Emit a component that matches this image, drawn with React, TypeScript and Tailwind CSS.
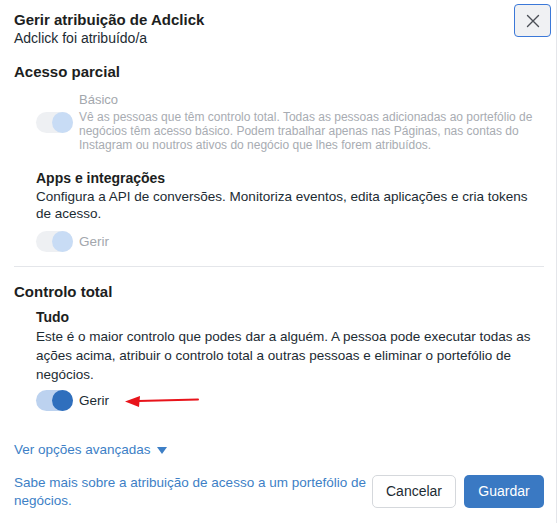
import React from "react";

function Toggle({ on, disabled }: { on: boolean; disabled?: boolean }) {
  return (
    <div
      className={
        "relative h-[21px] w-[37px] shrink-0 rounded-full " +
        (disabled ? "bg-[#eef0f3]" : "bg-[#bcd2ef]")
      }
    >
      <div
        className={
          "absolute right-0 top-0 h-[21px] w-[21px] rounded-full " +
          (disabled ? "bg-[#c8dcf5]" : "bg-[#2f6fbd]")
        }
      />
    </div>
  );
}

export default function App() {
  return (
    <div
      className="relative h-[523px] w-[559px] bg-white text-[#1c2b33]"
      style={{ fontFamily: '"Liberation Sans", Arial, sans-serif' }}
    >
      <div className="absolute right-[2px] top-0 h-full w-px bg-[#e4e6ea]" />
      {/* header */}
      <div className="flex items-start justify-between pl-[14px] pr-[8px] pt-[4px]">
        <div className="pt-[6px]">
          <div className="text-[15px] font-bold leading-[19px] text-[#1c1e21]">Gerir atribuição de Adclick</div>
          <div className="text-[14px] leading-[19px] text-[#1c2b33]">Adclick foi atribuído/a</div>
        </div>
        <button className="flex h-[33px] w-[37px] items-center justify-center rounded-[4px] border-[1.5px] border-[#3b78d8] bg-[#f0f1f3]">
          <svg width="14" height="14" viewBox="0 0 14 14" fill="none">
            <path d="M1.5 1.5 L12.5 12.5 M12.5 1.5 L1.5 12.5" stroke="#4b4f56" strokeWidth="1.4" strokeLinecap="round" />
          </svg>
        </button>
      </div>

      <div className="px-[14px]">
        <div className="mt-[14px] text-[15px] font-bold leading-[20px] text-[#1c1e21]">Acesso parcial</div>

        <div className="mt-[10px] flex items-center gap-[6px] pl-[22px]">
          <Toggle on disabled />
          <div>
            <div className="text-[13px] leading-[16px] text-[#a3a7ad]">Básico</div>
            <div className="mt-[2px] text-[12px] leading-[14px] text-[#a8acb2]">
              Vê as pessoas que têm controlo total. Todas as pessoas adicionadas ao portefólio de negócios têm acesso básico. Podem trabalhar apenas nas Páginas, nas contas do Instagram ou noutros ativos do negócio que lhes forem atribuídos.
            </div>
          </div>
        </div>

        <div className="mt-[17px] pl-[22px]">
          <div className="text-[14px] font-bold leading-[18px] text-[#1c1e21]">Apps e integrações</div>
          <div className="mt-[1px] text-[13.5px] leading-[17px] text-[#1c2b33]">
            Configura a API de conversões. Monitoriza eventos, edita aplicações e cria tokens de acesso.
          </div>
          <div className="mt-[9px] flex items-center gap-[6px]">
            <Toggle on disabled />
            <span className="text-[13.5px] leading-[18px] text-[#a3a7ad]">Gerir</span>
          </div>
        </div>

        <div className="mt-[14px] h-px w-[530px] bg-[#e4e6ea]" />

        <div className="mt-[15px] text-[15px] font-bold leading-[20px] text-[#1c1e21]">Controlo total</div>

        <div className="mt-[6px] pl-[22px]">
          <div className="text-[14px] font-bold leading-[18px] text-[#1c1e21]">Tudo</div>
          <div className="mt-[1px] text-[13.5px] leading-[19px] text-[#1c2b33]">
            Este é o maior controlo que podes dar a alguém. A pessoa pode executar todas as ações acima, atribuir o controlo total a outras pessoas e eliminar o portefólio de negócios.
          </div>
          <div className="mt-[6px] flex items-center gap-[6px]">
            <Toggle on />
            <span className="text-[13.5px] leading-[18px] text-[#1c2b33]">Gerir</span>
            <svg width="80" height="14" viewBox="0 0 80 14" className="ml-[9px]">
              <path d="M14 7 L74 5.5" stroke="#e8141b" strokeWidth="2" strokeLinecap="round" />
              <path d="M1 7.5 L16 2 L15 13 Z" fill="#e8141b" />
            </svg>
          </div>
        </div>

        <div className="mt-[30px] flex items-center gap-[6px] text-[13.5px] leading-[18px] text-[#3d7fc6]">
          <span>Ver opções avançadas</span>
          <svg width="10" height="7" viewBox="0 0 10 7">
            <path d="M0 0 H10 L5 7 Z" fill="#3d7fc6" />
          </svg>
        </div>

        <div className="mt-[15px] flex items-start justify-between">
          <div className="w-[365px] text-[13.5px] leading-[18px] text-[#3d7fc6]">
            Sabe mais sobre a atribuição de acesso a um portefólio de negócios.
          </div>
          <div className="mr-[1px] mt-[1px] flex gap-[8px]">
            <button className="h-[33px] w-[84px] rounded-[5px] border border-[#d5d8dc] bg-white text-[14px] text-[#1c2b33]">
              Cancelar
            </button>
            <button className="h-[33px] w-[80px] rounded-[5px] bg-[#3a79c3] text-[14px] text-white">
              Guardar
            </button>
          </div>
        </div>
      </div>
    </div>
  );
}
